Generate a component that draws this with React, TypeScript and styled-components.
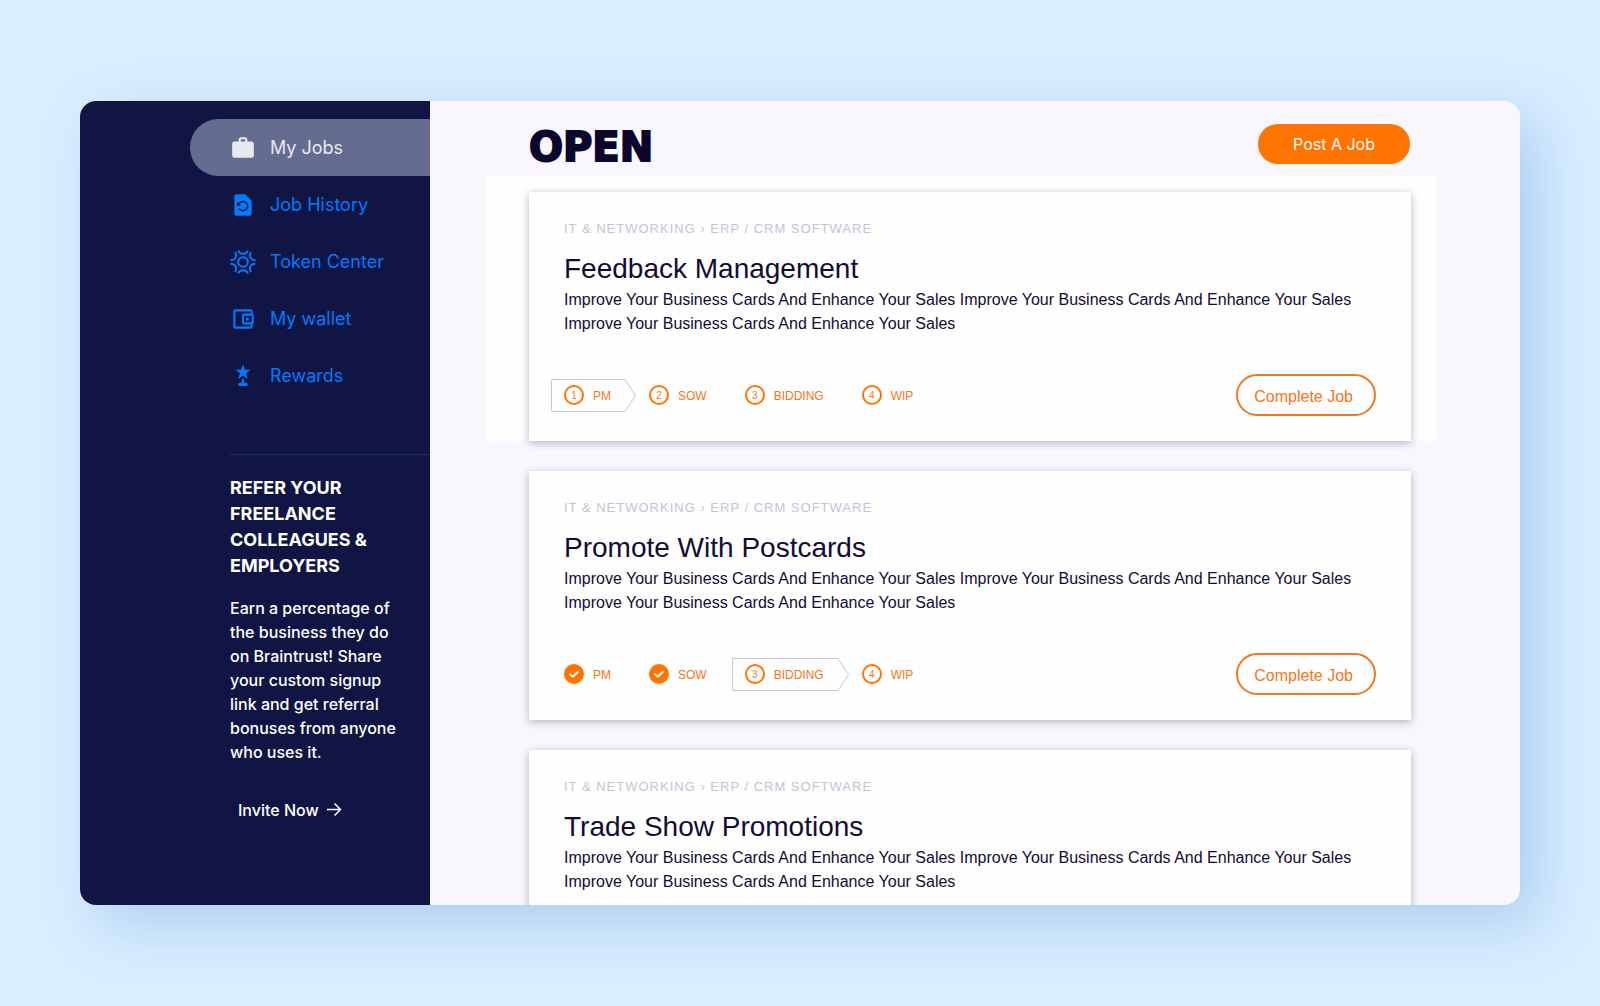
import React from "react";
import styled, { createGlobalStyle } from "styled-components";
import {
  MdWork,
  MdRestorePage,
  MdOutlineAccountBalanceWallet,
} from "react-icons/md";

const GlobalStyle = createGlobalStyle`
  * { box-sizing: border-box; }
  body {
    margin: 0;
    background: #d9eeff;
    font-family: "Liberation Sans", Arial, sans-serif;
  }
  h1, h2, p { margin: 0; }
`;

const orange = "#ff7300";
const ink = "#120c35";

const Page = styled.div`
  height: 100vh;
  padding: 101px 80px;
`;

const Window = styled.div`
  display: flex;
  height: 100%;
  border-radius: 16px;
  overflow: hidden;
  background: #f9f7fd;
  box-shadow: 20px 20px 60px #adcef0;
`;

const Sidebar = styled.aside`
  flex: 0 0 350px;
  padding-top: 18px;
  background: #101544;
  color: #fff;
  font-family: Inter, sans-serif;
`;

const Nav = styled.nav`
  display: flex;
  flex-direction: column;
  padding-left: 110px;
`;

const NavLink = styled.a<{ $active?: boolean }>`
  display: flex;
  align-items: center;
  gap: 14px;
  height: 57px;
  padding-left: 40px;
  border-radius: 29px 0 0 29px;
  background: ${(p) => (p.$active ? "#646c90" : "transparent")};
  color: ${(p) => (p.$active ? "#e8e8f2" : "#007aff")};
  font-size: 18px;
  text-decoration: none;

  svg {
    width: 26px;
    height: 26px;
  }
`;

const Refer = styled.section`
  margin: 50px 0 0 150px;
  padding: 20px 30px 0 0;
  border-top: 1px solid #1f2c5c;
`;

const ReferTitle = styled.h2`
  font-size: 18px;
  font-weight: 700;
  line-height: 26px;
`;

const ReferText = styled.p`
  margin-top: 17px;
  font-size: 16px;
  font-weight: 500;
  line-height: 24px;
`;

const InviteLink = styled.a`
  display: flex;
  align-items: center;
  gap: 7px;
  margin-top: 33px;
  padding-left: 8px;
  color: #fff;
  font-size: 16px;
  font-weight: 500;
  line-height: 26px;
  text-decoration: none;
`;

const Main = styled.main`
  flex: 1;
  min-width: 0;
`;

const Header = styled.header`
  display: flex;
  align-items: flex-start;
  justify-content: space-between;
  height: 75px;
  padding: 23px 110px 0 99px;
`;

const Heading = styled.h1`
  color: #0b062b;
  font-family: "DejaVu Sans", sans-serif;
  font-size: 40px;
  font-weight: 700;
  line-height: 46px;
  -webkit-text-stroke: 2px #0b062b;
`;

const PostButton = styled.button`
  width: 152px;
  height: 40px;
  border: 0;
  border-radius: 20px;
  background: ${orange};
  color: #fff;
  font-family: Inter, sans-serif;
  font-size: 16px;
`;

const JobSlot = styled.div<{ $highlight: boolean }>`
  margin: 0 84px 30px 56px;
  padding: 0 25px 0 43px;
  ${(p) => p.$highlight && "padding-top: 16px; background: #fefefe;"}
`;

const Card = styled.article`
  min-height: 249px;
  padding: 25px 35px;
  background: #fefefe;
  box-shadow: 0 2px 8px rgba(20, 12, 50, 0.3);
`;

const Category = styled.p`
  color: #c6c2d6;
  font-size: 13px;
  line-height: 24px;
  letter-spacing: 1px;
`;

const JobTitle = styled.h2`
  margin-top: 11px;
  color: ${ink};
  font-size: 28px;
  font-weight: 400;
  line-height: 34px;
`;

const Description = styled.p`
  margin-top: 2px;
  color: ${ink};
  font-size: 16px;
  line-height: 24px;
`;

const CardFooter = styled.div`
  display: flex;
  align-items: center;
  justify-content: space-between;
  margin-top: 38px;
`;

const Steps = styled.ol`
  display: flex;
  margin: 0 0 0 -13px;
  padding: 0;
  list-style: none;
`;

const StepItem = styled.li<{ $current: boolean }>`
  position: relative;
  display: flex;
  align-items: center;
  gap: 9px;
  height: 34px;
  padding: 0 25px 0 13px;
  color: #f2771a;
  font-size: 12px;

  &::before {
    content: "";
    display: ${(p) => (p.$current ? "block" : "none")};
    position: absolute;
    inset: 1px 11px 0 0;
    border: 1px solid #c9c5da;
    border-right: 0;
    border-radius: 2px 0 0 2px;
  }
`;

const StepTip = styled.svg`
  position: absolute;
  bottom: 0;
  right: 0;
`;

const StepName = styled.span`
  padding-top: 2px;
`;

const Badge = styled.span<{ $done: boolean }>`
  display: flex;
  align-items: center;
  justify-content: center;
  width: 20px;
  height: 20px;
  border: 2px solid ${orange};
  border-radius: 50%;
  background: ${(p) => (p.$done ? orange : "transparent")};
  font-size: 10px;
`;

const CompleteButton = styled.button`
  height: 42px;
  padding: 3px 21px 0 16px;
  border: 2px solid #f2771a;
  border-radius: 21px;
  background: transparent;
  color: #f2771a;
  font-family: inherit;
  font-size: 16px;
`;

const TokenIcon = () => (
  <svg viewBox="0 0 26 26" fill="none" stroke="currentColor" strokeWidth="2">
    <circle cx="13" cy="13" r="4.8" />
    <path d="M8.2 1.500C9.500 5.800 16.500 5.800 17.800 1.500M8.200 24.500C9.500 20.200 16.500 20.200 17.800 24.500" />
    <path d="M.5 11.200C5.500 11.200 7.500 7 5 3M.5 14.800C5.500 14.800 7.500 19 5 23" />
    <path d="M25.500 11.200C20.500 11.200 18.500 7 21 3M25.500 14.800C20.500 14.800 18.500 19 21 23" />
  </svg>
);

const RewardIcon = () => (
  <svg viewBox="0 0 26 26" fill="currentColor">
    <path d="M13 1.500l1.900 5.300H20.500l-4.500 3.500 1.700 5.700-4.700-3.400L8.300 16l1.700-5.700-4.500-3.500h5.600z" />
    <path d="M12 16l1-.8 1 .8v3.500l3.500.8v2.700h-9v-2.700l3.500-.8z" />
  </svg>
);

const navItems = [
  { label: "My Jobs", icon: <MdWork />, active: true },
  { label: "Job History", icon: <MdRestorePage /> },
  { label: "Token Center", icon: <TokenIcon /> },
  { label: "My wallet", icon: <MdOutlineAccountBalanceWallet /> },
  { label: "Rewards", icon: <RewardIcon /> },
];

const stepNames = ["PM", "SOW", "BIDDING", "WIP"];

type Job = { title: string; step?: number; highlight?: boolean };

const jobs: Job[] = [
  { title: "Feedback Management", step: 0, highlight: true },
  { title: "Promote With Postcards", step: 2 },
  { title: "Trade Show Promotions" },
];

function JobProgress({ step }: { step: number }) {
  return (
    <CardFooter>
      <Steps>
        {stepNames.map((name, i) => (
          <StepItem key={name} $current={i === step}>
            <Badge $done={i < step}>
              {i < step ? (
                <svg width="12" height="12" viewBox="0 0 12 12" fill="none" stroke="#fff" strokeWidth="2" strokeLinecap="round" strokeLinejoin="round">
                  <path d="M2 6.200l2.800 2.500L10 3.700" />
                </svg>
              ) : (
                i + 1
              )}
            </Badge>
            <StepName>{name}</StepName>
            {i === step && (
              <StepTip width="11" height="33" viewBox="0 0 11 33" fill="none" stroke="#c9c5da">
                <path d="M0 .5L10.500 16.500 0 32.500" />
              </StepTip>
            )}
          </StepItem>
        ))}
      </Steps>
      <CompleteButton type="button">Complete Job</CompleteButton>
    </CardFooter>
  );
}

function JobCard({ title, step }: Job) {
  return (
    <Card>
      <Category>IT &amp; NETWORKING › ERP / CRM SOFTWARE</Category>
      <JobTitle>{title}</JobTitle>
      <Description>
        Improve Your Business Cards And Enhance Your Sales Improve Your Business
        Cards And Enhance Your Sales Improve Your Business Cards And Enhance
        Your Sales
      </Description>
      {step !== undefined && <JobProgress step={step} />}
    </Card>
  );
}

export default function App() {
  return (
    <>
      <GlobalStyle />
      <Page>
        <Window>
          <Sidebar>
            <Nav>
              {navItems.map((item) => (
                <NavLink key={item.label} href="#" $active={item.active}>
                  {item.icon}
                  {item.label}
                </NavLink>
              ))}
            </Nav>
            <Refer>
              <ReferTitle>REFER YOUR FREELANCE COLLEAGUES &amp; EMPLOYERS</ReferTitle>
              <ReferText>
                Earn a percentage of the business they do on Braintrust! Share
                your custom signup link and get referral bonuses from anyone who
                uses it.
              </ReferText>
              <InviteLink href="#">
                Invite Now
                <svg width="16" height="16" viewBox="0 0 16 16" fill="none" stroke="currentColor" strokeWidth="1.500">
                  <path d="M1 7.500h13M8.500 1.500l6 6-6 6" />
                </svg>
              </InviteLink>
            </Refer>
          </Sidebar>
          <Main>
            <Header>
              <Heading>OPEN</Heading>
              <PostButton type="button">Post A Job</PostButton>
            </Header>
            {jobs.map((job) => (
              <JobSlot key={job.title} $highlight={!!job.highlight}>
                <JobCard title={job.title} step={job.step} />
              </JobSlot>
            ))}
          </Main>
        </Window>
      </Page>
    </>
  );
}
